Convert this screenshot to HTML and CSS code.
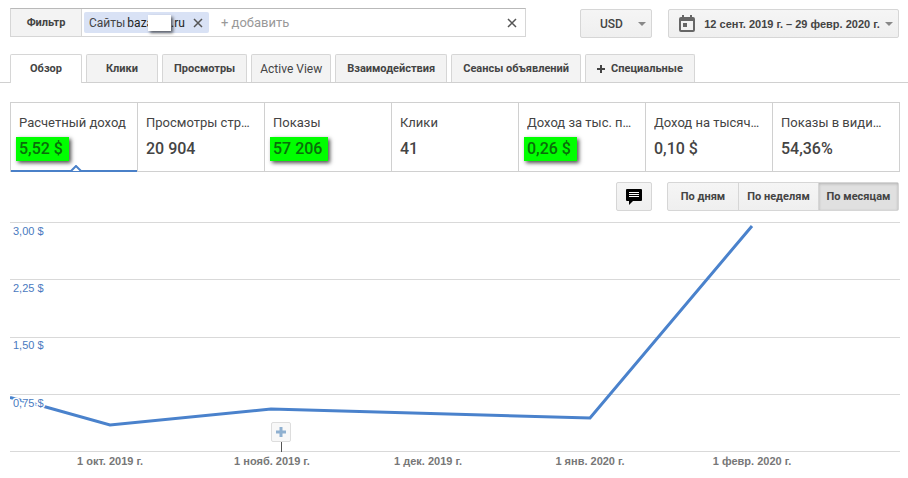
FILE: index.html
```html
<!DOCTYPE html>
<html lang="ru">
<head>
    <meta charset="UTF-8">
    <meta name="viewport" content="width=device-width, initial-scale=1.0">
    <title>Обзор</title>
    <link rel="stylesheet" href="styles.css">
</head>
<body>
    <div class="toolbar">
        <div class="filter">
            <button class="filter-button">Фильтр</button>
            <div class="filter-field">
                <span class="chip">
                    <span class="chip-name">Сайты</span>
                    <span class="chip-value">baza<span class="chip-mask"></span>.ru</span>
                    <button class="close" aria-label="Удалить фильтр">
                        <svg width="10" height="10" viewBox="0 0 10 10"><path d="M1 1L9 9M9 1L1 9"/></svg>
                    </button>
                </span>
                <input type="text" class="filter-input" placeholder="+ добавить" aria-label="Добавить фильтр">
                <button class="close" aria-label="Очистить">
                    <svg width="10" height="10" viewBox="0 0 10 10"><path d="M1 1L9 9M9 1L1 9"/></svg>
                </button>
            </div>
        </div>
        <div class="currency">
            <select class="currency-select" aria-label="Валюта">
                <option>USD</option>
                <option>EUR</option>
            </select>
            <span class="arrow"></span>
        </div>
        <button class="dates">
            <svg width="16" height="17" viewBox="0 0 16 17">
                <path fill="#666" fill-rule="evenodd" d="M3 0H5V2H11V0H13V2H14Q16 2 16 4V15Q16 17 14 17H2Q0 17 0 15V4Q0 2 2 2H3ZM2 6V15H14V6Z"/>
                <path fill="#666" d="M4 8H8V12H4Z"/>
            </svg>
            <span class="dates-text">12 сент. 2019 г. – 29 февр. 2020 г.</span>
            <span class="arrow"></span>
        </button>
    </div>

    <div class="tabs">
        <button class="tab active">Обзор</button>
        <button class="tab">Клики</button>
        <button class="tab">Просмотры</button>
        <button class="tab light">Active View</button>
        <button class="tab">Взаимодействия</button>
        <button class="tab">Сеансы объявлений</button>
        <button class="tab">
            <svg class="plus" width="8" height="8" viewBox="0 0 8 8"><path d="M4 0V8M0 4H8"/></svg>Специальные
        </button>
    </div>

    <div class="metrics">
        <button class="metric selected">
            <span class="metric-name">Расчетный доход</span>
            <span class="metric-value marked">5,52 $</span>
            <svg class="pointer" width="12" height="7" viewBox="0 0 12 7"><path d="M1 6L6 1L11 6"/></svg>
        </button>
        <button class="metric">
            <span class="metric-name">Просмотры страниц</span>
            <span class="metric-value">20 904</span>
        </button>
        <button class="metric">
            <span class="metric-name">Показы</span>
            <span class="metric-value marked">57 206</span>
        </button>
        <button class="metric">
            <span class="metric-name">Клики</span>
            <span class="metric-value">41</span>
        </button>
        <button class="metric">
            <span class="metric-name">Доход за тыс. показов</span>
            <span class="metric-value marked">0,26 $</span>
        </button>
        <button class="metric">
            <span class="metric-name">Доход на тысячу показов</span>
            <span class="metric-value">0,10 $</span>
        </button>
        <button class="metric">
            <span class="metric-name">Показы в видимой области</span>
            <span class="metric-value">54,36%</span>
        </button>
    </div>

    <div class="controls">
        <button class="note" aria-label="Заметки">
            <svg width="16" height="16" viewBox="0 0 16 16">
                <path d="M1 0H15Q16 0 16 1V11Q16 12 15 12H7L3 16V12H1Q0 12 0 11V1Q0 0 1 0Z"/>
                <path stroke="#fff" d="M3 3.5H13M3 5.5H13M3 7.5H13"/>
            </svg>
        </button>
        <div class="periods">
            <button class="period">По дням</button>
            <button class="period">По неделям</button>
            <button class="period pressed">По месяцам</button>
        </div>
    </div>

    <div class="chart">
        <svg class="plot" viewBox="0 0 890 248">
            <path class="grid" d="M0 .5H890M0 57.5H890M0 115.5H890M0 172.5H890M0 229.5H890"/>
            <polyline class="line" points="0,175.5 34,184.5 100,203 261,187 580,196 742,4"/>
            <g class="y-labels">
                <text x="3" y="13">3,00 $</text>
                <text x="3" y="70">2,25 $</text>
                <text x="3" y="127">1,50 $</text>
                <text x="3" y="185">0,75 $</text>
            </g>
            <g class="x-labels">
                <text x="100" y="243">1 окт. 2019 г.</text>
                <text x="262" y="243">1 нояб. 2019 г.</text>
                <text x="418" y="243">1 дек. 2019 г.</text>
                <text x="580" y="243">1 янв. 2020 г.</text>
                <text x="742" y="243">1 февр. 2020 г.</text>
            </g>
            <path class="stem" d="M271.5 220V230"/>
        </svg>
        <button class="add-note" aria-label="Добавить заметку">
            <svg width="10" height="10" viewBox="0 0 10 10"><path d="M5 0V10M0 5H10"/></svg>
        </button>
    </div>
</body>
</html>
```
FILE: styles.css
```css
* {
    box-sizing: border-box;
}
body {
    margin: 0;
    padding-top: 8px;
    background: #fff;
    color: #444;
    font-family: Roboto, Arial, sans-serif;
    font-size: 11px;
}
button, input, select {
    font: inherit;
    color: inherit;
    margin: 0;
    padding: 0;
    border: none;
    background: none;
}
button {
    cursor: pointer;
}
svg {
    display: block;
    fill: none;
}
.toolbar {
    display: flex;
    gap: 16px;
    padding: 0 9px 0 10px;
}
.filter {
    display: flex;
    flex: 1;
    height: 29px;
    margin-right: 38px;
    border: 1px solid #d6d6d6;
    border-top-color: #b9b9b9;
}
.filter-button {
    width: 71px;
    background: #f3f3f3;
    border-right: 1px solid #d6d6d6;
    font-weight: bold;
}
.filter-field {
    display: flex;
    flex: 1;
    align-items: center;
    min-width: 0;
    padding: 0 5px 0 2px;
}
.chip {
    display: flex;
    align-items: center;
    height: 21px;
    padding: 0 3px 0 5px;
    background: #d9e2f5;
    border-radius: 2px;
    white-space: nowrap;
    font-size: 12px;
}
.chip-value {
    display: flex;
    align-items: center;
    padding: 0 5px 0 2px;
    color: #222;
}
/* hides part of the site name */
.chip-mask {
    width: 23px;
    height: 16px;
    margin-left: -5px;
    background: #fff;
    box-shadow: 2px 2px 3px rgba(0, 0, 0, 0.6);
    position: relative;
}
.close {
    padding: 3px;
}
.close path {
    stroke: #555;
    stroke-width: 1.5;
}
.filter-input {
    flex: 1;
    min-width: 0;
    padding-left: 12px;
    font-size: 13px;
    outline: none;
}
.filter-input::placeholder {
    color: #999;
}
.currency, .dates, .note, .periods {
    height: 29px;
    border: 1px solid #d6d6d6;
    border-radius: 2px;
    background: linear-gradient(#f5f5f5, #efefef);
}
.currency, .dates {
    margin-top: 1px;
}
.currency {
    display: grid;
    align-items: center;
    width: 72px;
}
.currency-select {
    grid-area: 1 / 1;
    height: 27px;
    padding-left: 19px;
    appearance: none;
    font-size: 12px;
    font-weight: 500;
}
.arrow {
    border: 4px solid transparent;
    border-top-color: #888;
    border-bottom: none;
}
.currency .arrow {
    grid-area: 1 / 1;
    justify-self: end;
    margin-right: 5px;
    pointer-events: none;
}
.dates {
    display: flex;
    align-items: center;
    justify-content: space-between;
    width: 231px;
    padding: 0 5px 0 10px;
}
.dates-text {
    padding-left: 4px;
    font: bold 11px "Liberation Sans", Arial, sans-serif;
}
.tabs {
    display: flex;
    gap: 4px;
    margin-top: 16px;
    padding-left: 10px;
    border-bottom: 1px solid #d0d0d0;
}
.tab {
    display: flex;
    align-items: center;
    justify-content: center;
    gap: 6px;
    min-width: 72px;
    height: 28px;
    padding: 0 11px;
    border: 1px solid #d6d6d6;
    border-bottom: none;
    border-radius: 2px 2px 0 0;
    background: #f3f3f3;
    font-weight: bold;
    line-height: 14px;
    white-space: nowrap;
}
.tab.active {
    height: 29px;
    margin-bottom: -1px;
    background: #fff;
}
.tab.light {
    padding: 0 8px;
    font-size: 12px;
    font-weight: normal;
}
.plus path {
    stroke: #444;
    stroke-width: 2;
}
.metrics {
    display: grid;
    grid-template-columns: 126fr repeat(6, 127fr);
    margin: 19px 8px 0 10px;
    border: 1px solid #d0d0d0;
}
.metric {
    display: flex;
    flex-direction: column;
    align-items: flex-start;
    gap: 5px;
    min-width: 0;
    height: 68px;
    padding: 11px 10px 0 8px;
    position: relative;
}
.metric + .metric {
    border-left: 1px solid #d0d0d0;
}
.metric-name {
    width: 100%;
    overflow: hidden;
    text-align: left;
    text-overflow: ellipsis;
    white-space: nowrap;
    font-size: 13px;
    line-height: 18px;
}
.metric-value {
    font-size: 16px;
    font-weight: 500;
    line-height: 24px;
}
.marked {
    margin-left: -3px;
    padding: 0 6px 0 3px;
    background: #0f0;
    box-shadow: 2px 2px 4px rgba(0, 0, 0, 0.7);
    color: #0a6e0a;
}
.metric.selected::after {
    content: "";
    position: absolute;
    left: 0;
    right: 0;
    bottom: -1px;
    height: 2px;
    background: #4a80c8;
}
.pointer {
    position: absolute;
    left: 47%;
    bottom: -1px;
    z-index: 1;
}
.pointer path {
    fill: #fff;
    stroke: #4a80c8;
    stroke-width: 2;
}
.controls {
    display: flex;
    justify-content: flex-end;
    gap: 15px;
    margin: 10px 9px 0 10px;
}
.note {
    display: flex;
    align-items: center;
    justify-content: center;
    width: 36px;
}
.note path:first-child {
    fill: #000;
}
.periods {
    display: flex;
    font-weight: bold;
}
.period {
    width: 80px;
    white-space: nowrap;
}
.period:first-child {
    width: 70px;
}
.period + .period {
    border-left: 1px solid #d6d6d6;
}
.period.pressed {
    background: #e0e0e0;
    box-shadow: inset 0 1px 3px rgba(0, 0, 0, 0.2);
}
.chart {
    margin: 11px 8px 0 10px;
    position: relative;
}
.plot {
    width: 100%;
    height: auto;
    font-family: "Liberation Sans", Arial, sans-serif;
    font-size: 11px;
}
.grid {
    stroke: #d9d9d9;
}
.line {
    stroke: #4a82cc;
    stroke-width: 3;
}
.y-labels {
    fill: #4a7ac0;
    stroke: #fff;
    stroke-width: 3;
    paint-order: stroke;
}
.x-labels {
    fill: #777;
    font-weight: bold;
    text-anchor: middle;
}
.stem {
    stroke: #555;
}
.add-note {
    display: flex;
    align-items: center;
    justify-content: center;
    width: 20px;
    height: 20px;
    border: 1px solid #ddd;
    border-radius: 2px;
    background: #f8f8f8;
    position: absolute;
    left: 29.3%;
    bottom: 28px;
}
.add-note path {
    stroke: #8fb0d0;
    stroke-width: 3;
}
```
